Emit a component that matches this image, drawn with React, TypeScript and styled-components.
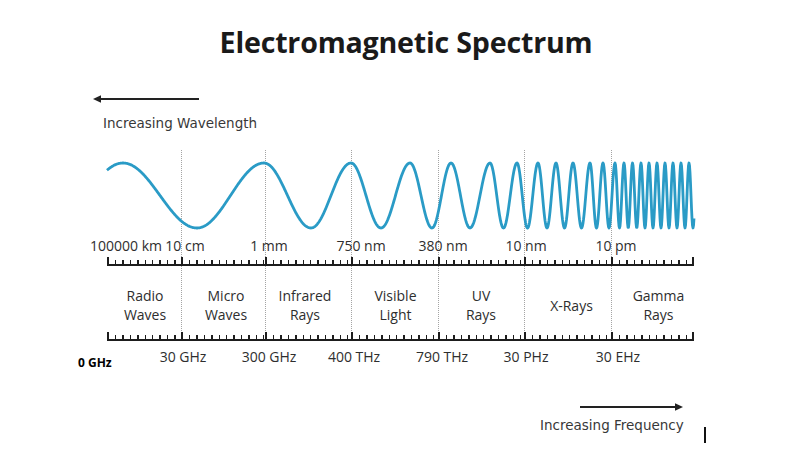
import styled, { createGlobalStyle } from 'styled-components'

const GlobalStyle = createGlobalStyle`
  html, body {
    margin: 0;
    padding: 0;
    background: #ffffff;
  }
  body {
    font-family: 'Open Sans', 'Liberation Sans', sans-serif;
    color: #2f2f2f;
  }
`

const INK = '#1d1d1d'
const WAVE_WIDTH = 587
const WAVE_HEIGHT = 86
const COLUMN_WIDTHS = [74, 84, 86, 87, 86, 87, 83]

// [x, phase in half turns] — peaks are even, troughs odd
const WAVE_KEYS: [number, number][] = [
  [16, 0], [90, 1], [157, 2], [204, 3], [244, 4], [274, 5], [303, 6], [325, 7],
  [344, 8], [363, 9], [383, 10], [410, 12], [431, 14], [449, 16], [466, 18],
  [483, 20], [496, 22], [508, 24], [517, 26], [525.5, 28], [534, 30], [542, 32],
  [550, 34], [558, 36], [566, 38], [574, 40], [582, 42],
]

function phaseAt(x: number) {
  let i = 0
  if (x >= WAVE_KEYS[WAVE_KEYS.length - 1][0]) i = WAVE_KEYS.length - 2
  else while (i < WAVE_KEYS.length - 2 && x > WAVE_KEYS[i + 1][0]) i++
  const [x0, n0] = WAVE_KEYS[i]
  const [x1, n1] = WAVE_KEYS[i + 1]
  return (n0 + ((x - x0) / (x1 - x0)) * (n1 - n0)) * Math.PI
}

function wavePath() {
  const mid = 45.5
  const amp = 32.5
  const pts: string[] = []
  for (let x = 0; x <= WAVE_WIDTH; x += 0.5) {
    const y = mid - amp * Math.cos(phaseAt(x))
    pts.push(`${pts.length ? 'L' : 'M'}${x.toFixed(1)} ${y.toFixed(2)}`)
  }
  return pts.join(' ')
}

const WAVELENGTHS = [
  { text: '10 cm', shift: 4 },
  { text: '1 mm', shift: 4 },
  { text: '750 nm', shift: 10 },
  { text: '380 nm', shift: 5 },
  { text: '10 nm', shift: 2 },
  { text: '10 pm', shift: 5 },
]

const FREQUENCIES = [
  { text: '30 GHz', shift: 2 },
  { text: '300 GHz', shift: 4 },
  { text: '400 THz', shift: 3 },
  { text: '790 THz', shift: 4 },
  { text: '30 PHz', shift: 2 },
  { text: '30 EHz', shift: 7 },
]

const BANDS = [
  { lines: ['Radio', 'Waves'], shift: 1 },
  { lines: ['Micro', 'Waves'], shift: 3 },
  { lines: ['Infrared', 'Rays'], shift: -3 },
  { lines: ['Visible', 'Light'], shift: 1 },
  { lines: ['UV', 'Rays'], shift: 0 },
  { lines: ['X-Rays'], shift: 4 },
  { lines: ['Gamma', 'Rays'], shift: 6 },
]

const Page = styled.div`
  width: 812px;
  height: 463px;
  overflow: hidden;
  display: flex;
  flex-direction: column;
  padding-top: 25px;
  box-sizing: border-box;
`

const Title = styled.h1`
  margin: 0;
  text-align: center;
  font-size: 28.6px;
  line-height: 34px;
  font-weight: 700;
  color: #1a1a1a;
  letter-spacing: -0.2px;
`

const Hint = styled.div<{ $left: number; $top: number; $gap: number }>`
  align-self: flex-start;
  display: flex;
  flex-direction: column;
  align-items: flex-start;
  gap: ${({ $gap }) => $gap}px;
  margin: ${({ $top }) => $top}px 0 0 ${({ $left }) => $left}px;
`

const HintText = styled.span<{ $indent: number }>`
  margin-left: ${({ $indent }) => $indent}px;
  font-family: 'DejaVu Sans', Verdana, sans-serif;
  font-size: 13.5px;
  line-height: 16px;
  color: #383838;
  white-space: nowrap;
`

const Footer = styled.div`
  display: flex;
  align-items: flex-start;
`

const Caret = styled.span`
  width: 2px;
  height: 16px;
  margin: 57px 0 0 20px;
  background: #111;
`

const Diagram = styled.div`
  display: grid;
  grid-template-columns: ${COLUMN_WIDTHS.map((w) => `${w}px`).join(' ')};
  grid-template-rows: 86px 19px 11px 66px 9px 29px;
  width: ${WAVE_WIDTH}px;
  margin: 19px 0 0 107px;
`

const Lane = styled.div<{ $col: number; $divider: boolean }>`
  grid-column: ${({ $col }) => $col};
  grid-row: 1 / 6;
  border-left: ${({ $divider }) => ($divider ? '1px dotted #a4a4a4' : 'none')};
`

const WaveSvg = styled.svg`
  grid-column: 1 / -1;
  grid-row: 1;
  width: ${WAVE_WIDTH}px;
  height: ${WAVE_HEIGHT}px;
  overflow: visible;
  z-index: 1;
`

const ScaleLabel = styled.span<{ $col: number; $row: number; $shift: number }>`
  grid-column: ${({ $col }) => $col};
  grid-row: ${({ $row }) => $row};
  justify-self: start;
  align-self: start;
  transform: translateX(calc(-50% + ${({ $shift }) => $shift}px));
  font-size: 14px;
  line-height: 19px;
  color: #2e2e2e;
  white-space: nowrap;
  z-index: 2;
`

const FreqLabel = styled(ScaleLabel)`
  margin-top: 7px;
  line-height: 18px;
`

const EdgeLabel = styled.span`
  grid-column: 1;
  grid-row: 2;
  justify-self: end;
  margin-right: 19px;
  font-size: 14px;
  line-height: 19px;
  color: #2e2e2e;
  white-space: nowrap;
`

const OriginLabel = styled.span`
  grid-column: 1;
  grid-row: 6;
  justify-self: start;
  align-self: start;
  margin: 15px 0 0 -29px;
  font-size: 12px;
  line-height: 14px;
  font-weight: 700;
  color: #000;
  white-space: nowrap;
`

const Ruler = styled.div<{ $col: number; $row: number; $end: boolean }>`
  grid-column: ${({ $col }) => $col};
  grid-row: ${({ $row }) => $row};
  align-self: end;
  height: 9px;
  box-sizing: border-box;
  border-bottom: 2px solid ${INK};
  border-left: 2px solid ${INK};
  border-right: ${({ $end }) => ($end ? `2px solid ${INK}` : '0')};
  background: repeating-linear-gradient(90deg, transparent 0 6px, ${INK} 6px 7.4px) left bottom / 100% 4px no-repeat;
`

const Band = styled.div<{ $col: number; $shift: number }>`
  grid-column: ${({ $col }) => $col};
  grid-row: 4;
  display: flex;
  flex-direction: column;
  align-items: center;
  justify-content: center;
  padding: 12px 0 0 ${({ $shift }) => Math.max(0, $shift) * 2}px;
  padding-right: ${({ $shift }) => Math.max(0, -$shift) * 2}px;
  font-size: 14px;
  line-height: 19px;
  color: #2e2e2e;
  text-align: center;
`

const ArrowSvg = styled.svg<{ $end: boolean }>`
  align-self: ${({ $end }) => ($end ? 'flex-end' : 'flex-start')};
  margin-right: ${({ $end }) => ($end ? 1 : 0)}px;
`

function LeftArrow() {
  return (
    <ArrowSvg $end={false} width="106" height="10" viewBox="0 0 106 10">
      <path d="M6 5H106" stroke="#222" strokeWidth="2" />
      <path d="M0 5L8 1.2V8.8Z" fill="#222" />
    </ArrowSvg>
  )
}

function RightArrow() {
  return (
    <ArrowSvg $end width="103" height="10" viewBox="0 0 103 10">
      <path d="M0 5H97" stroke="#222" strokeWidth="2" />
      <path d="M103 5L95 1.2V8.8Z" fill="#222" />
    </ArrowSvg>
  )
}

export default function App() {
  const d = wavePath()
  return (
    <Page>
      <GlobalStyle />
      <Title>Electromagnetic Spectrum</Title>

      <Hint $left={93} $top={35} $gap={11}>
        <LeftArrow />
        <HintText $indent={10}>Increasing Wavelength</HintText>
      </Hint>

      <Diagram>
        {COLUMN_WIDTHS.map((_, i) => (
          <Lane key={`lane-${i}`} $col={i + 1} $divider={i > 0} />
        ))}

        <WaveSvg viewBox={`0 0 ${WAVE_WIDTH} ${WAVE_HEIGHT}`}>
          <path d={d} fill="none" stroke="#2a9bc6" strokeWidth="2.8" strokeLinejoin="round" />
        </WaveSvg>

        <EdgeLabel>100000 km</EdgeLabel>
        {WAVELENGTHS.map((w, i) => (
          <ScaleLabel key={w.text} $col={i + 2} $row={2} $shift={w.shift}>
            {w.text}
          </ScaleLabel>
        ))}

        {COLUMN_WIDTHS.map((_, i) => (
          <Ruler key={`top-${i}`} $col={i + 1} $row={3} $end={i === COLUMN_WIDTHS.length - 1} />
        ))}

        {BANDS.map((b, i) => (
          <Band key={b.lines.join(' ')} $col={i + 1} $shift={b.shift}>
            {b.lines.map((line) => (
              <span key={line}>{line}</span>
            ))}
          </Band>
        ))}

        {COLUMN_WIDTHS.map((_, i) => (
          <Ruler key={`bottom-${i}`} $col={i + 1} $row={5} $end={i === COLUMN_WIDTHS.length - 1} />
        ))}

        <OriginLabel>0 GHz</OriginLabel>
        {FREQUENCIES.map((f, i) => (
          <FreqLabel key={f.text} $col={i + 2} $row={6} $shift={f.shift}>
            {f.text}
          </FreqLabel>
        ))}
      </Diagram>

      <Footer>
        <Hint $left={540} $top={32} $gap={5}>
          <RightArrow />
          <HintText $indent={0}>Increasing Frequency</HintText>
        </Hint>
        <Caret />
      </Footer>
    </Page>
  )
}
